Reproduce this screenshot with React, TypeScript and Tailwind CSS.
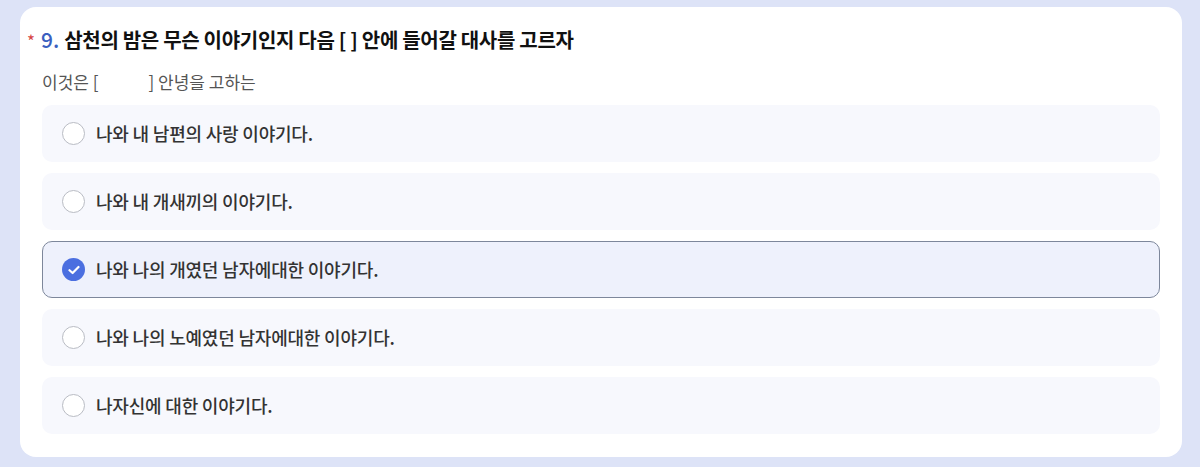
import React from "react";

const options = [
  "나와 내 남편의 사랑 이야기다.",
  "나와 내 개새끼의 이야기다.",
  "나와 나의 개였던 남자에대한 이야기다.",
  "나와 나의 노예였던 남자에대한 이야기다.",
  "나자신에 대한 이야기다.",
];

export default function App() {
  return (
    <div
      className="w-[1200px] h-[467px] bg-[#dde3f7] pt-[7px] pl-[20px] pr-[18px] pb-[10px]"
      style={{ fontFamily: '"Noto Sans CJK KR", "Noto Sans", sans-serif' }}
    >
      <div className="h-[450px] bg-white rounded-[16px] pl-[22px] pr-[22px] pt-[17px]">
        <div className="flex items-baseline">
          <span className="text-[#d64545] text-[17px] ml-[-15px] mr-[6px]">*</span>
          <span className="text-[#3b5fc0] text-[21px] font-medium mr-[5px]">9.</span>
          <span className="text-[#111] text-[20px] font-bold tracking-[-0.3px]">
            삼천의 밤은 무슨 이야기인지 다음 [ ] 안에 들어갈 대사를 고르자
          </span>
        </div>
        <div className="mt-[13px] text-[17px] text-[#555] flex">
          <span>이것은 [</span>
          <span className="w-[50px]" />
          <span>] 안녕을 고하는</span>
        </div>
        <div className="mt-[11px] flex flex-col gap-[11px]">
          {options.map((o, i) => {
            const sel = i === 2;
            return (
              <div
                key={i}
                className={
                  "h-[57px] rounded-[10px] flex items-center pl-[19px] " +
                  (sel
                    ? "bg-[#eef1fc] border border-[#7d879b]"
                    : "bg-[#f7f8fd] border border-transparent")
                }
              >
                {sel ? (
                  <div className="w-[23px] h-[23px] rounded-full bg-[#4b6fe0] flex items-center justify-center">
                    <svg width="12" height="10" viewBox="0 0 12 10" fill="none">
                      <path d="M1.5 5.2 L4.6 8 L10.5 2" stroke="white" strokeWidth="2.2" strokeLinecap="round" strokeLinejoin="round" />
                    </svg>
                  </div>
                ) : (
                  <div className="w-[23px] h-[23px] rounded-full border-[1.5px] border-[#b9bcc4] bg-white" />
                )}
                <span className="ml-[11px] text-[18px] text-[#333] font-medium tracking-[-0.2px]">{o}</span>
              </div>
            );
          })}
        </div>
      </div>
    </div>
  );
}
